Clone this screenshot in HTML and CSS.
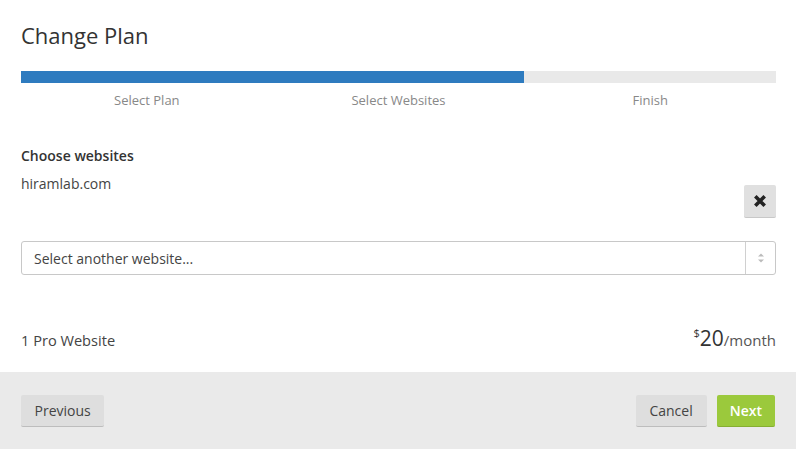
FILE: index.html
```html
<!DOCTYPE html>
<html>
<head>
<meta charset="utf-8">
<link rel="stylesheet" href="styles.css">
</head>
<body>
<div class="modal">
  <div class="body">
    <h1 class="title">Change Plan</h1>
    <div class="progress">
      <div class="progress-fill" style="width:66.6%"></div>
    </div>
    <div class="steps">
      <span class="step">Select Plan</span>
      <span class="step">Select Websites</span>
      <span class="step">Finish</span>
    </div>
    <h2 class="section-title">Choose websites</h2>
    <div class="site-row">
      <span class="site-name">hiramlab.com</span>
      <button class="remove-btn" aria-label="Remove">
        <svg width="14" height="14" viewBox="0 0 14 14"><path d="M2.3 2.3 L11.7 11.7 M11.7 2.3 L2.3 11.7" stroke="#222" stroke-width="3.6" stroke-linecap="butt"/></svg>
      </button>
    </div>
    <div class="select">
      <span class="select-text">Select another website...</span>
      <span class="select-arrows">
        <svg width="10" height="14" viewBox="0 0 10 14"><path d="M2 5.5 L5 2.5 L8 5.5 Z" fill="#bbb"/><path d="M2 8.5 L5 11.5 L8 8.5 Z" fill="#bbb"/></svg>
      </span>
    </div>
    <div class="summary">
      <span class="summary-label">1 Pro Website</span>
      <span class="price"><sup class="currency">$</sup><span class="amount">20</span><span class="period">/month</span></span>
    </div>
  </div>
  <div class="footer">
    <button class="btn btn-prev">Previous</button>
    <div class="footer-right">
      <button class="btn btn-cancel">Cancel</button>
      <button class="btn btn-primary">Next</button>
    </div>
  </div>
</div>
</body>
</html>
```
FILE: styles.css
```css
* { box-sizing: border-box; }
html, body {
  margin: 0;
  padding: 0;
  background: #fff;
  font-family: "Open Sans", "Liberation Sans", sans-serif;
  color: #333;
}
.modal {
  width: 796px;
  height: 449px;
  display: flex;
  flex-direction: column;
}
.body {
  padding: 20px 20px 0 21px;
  flex: 1;
}
.title {
  margin: 0;
  font-size: 22px;
  font-weight: 400;
  line-height: 30px;
  color: #333;
}
.progress {
  margin-top: 21px;
  height: 12px;
  background: #e9e9e9;
}
.progress-fill {
  height: 100%;
  background: #2e7bbf;
}
.steps {
  display: grid;
  grid-template-columns: 1fr 1fr 1fr;
  margin-top: 8px;
}
.step {
  text-align: center;
  font-size: 13px;
  line-height: 18px;
  color: #888;
}
.section-title {
  margin: 37px 0 0;
  font-size: 14px;
  font-weight: 600;
  line-height: 20px;
  color: #333;
}
.site-row {
  display: flex;
  justify-content: space-between;
  align-items: flex-start;
  margin-top: 8px;
}
.site-name {
  font-size: 14px;
  line-height: 20px;
  color: #444;
}
.remove-btn {
  margin-top: 11px;
  width: 32px;
  height: 33px;
  border: none;
  border-bottom: 1px solid #c8c8c8;
  border-radius: 2px;
  background: #e0e0e0;
  display: flex;
  align-items: center;
  justify-content: center;
  padding: 0;
}
.select {
  margin-top: 23px;
  height: 34px;
  border: 1px solid #c8c8c8;
  border-radius: 3px;
  display: flex;
  align-items: center;
}
.select-text {
  flex: 1;
  padding-left: 12px;
  font-size: 14px;
  color: #444;
}
.select-arrows {
  width: 30px;
  height: 100%;
  border-left: 1px solid #d0d0d0;
  display: flex;
  align-items: center;
  justify-content: center;
}
.summary {
  display: flex;
  justify-content: space-between;
  align-items: baseline;
  margin-top: 49px;
}
.summary-label {
  font-size: 14.6px;
  color: #444;
}
.price {
  color: #333;
}
.currency {
  font-size: 11px;
  vertical-align: 9px;
  line-height: 0;
}
.amount {
  font-size: 21px;
}
.period {
  font-size: 15px;
  color: #555;
}
.footer {
  height: 77px;
  background: #eaeaea;
  display: flex;
  justify-content: space-between;
  align-items: center;
  padding: 0 21px;
}
.footer-right {
  display: flex;
  gap: 10px;
}
.btn {
  height: 32px;
  padding: 0 13px;
  border: none;
  border-bottom: 1px solid #bdbdbd;
  border-radius: 2px;
  background: #dedede;
  font-family: "Open Sans", "Liberation Sans", sans-serif;
  font-size: 14px;
  color: #444;
}
.btn-prev {
  padding: 0 13.5px;
}
.btn-cancel {
  padding: 0 14px 0 13px;
}
.btn-primary {
  background: #9bc93c;
  border-bottom-color: #86ae32;
  color: #fff;
  font-weight: 600;
  padding: 0 13px;
}
```
